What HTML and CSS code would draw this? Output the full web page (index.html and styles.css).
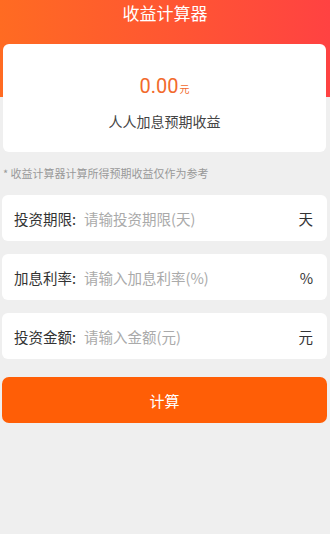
FILE: index.html
```
<!DOCTYPE html>
<html lang="zh">
<head>
<meta charset="utf-8">
<link rel="stylesheet" href="styles.css">
</head>
<body>
<div class="page">
  <div class="hero">
    <div class="title">收益计算器</div>
  </div>
  <div class="content">
    <div class="card">
      <div class="amount">0.00<span class="unit">元</span></div>
      <div class="caption">人人加息预期收益</div>
    </div>
    <div class="note">* 收益计算器计算所得预期收益仅作为参考</div>
    <div class="row"><span class="label">投资期限:</span><span class="ph">请输投资期限(天)</span><span class="suffix">天</span></div>
    <div class="row"><span class="label">加息利率:</span><span class="ph">请输入加息利率(%)</span><span class="suffix">%</span></div>
    <div class="row"><span class="label">投资金额:</span><span class="ph">请输入金额(元)</span><span class="suffix">元</span></div>
    <button class="btn">计算</button>
  </div>
</div>
</body>
</html>
```
FILE: styles.css
```
html, body {
  margin: 0;
  padding: 0;
}
body {
  background: #efefef;
  font-family: "Noto Sans CJK SC", "Noto Sans", sans-serif;
  width: 330px;
  height: 534px;
  overflow: hidden;
}
.page {
  position: relative;
}
.hero {
  height: 97px;
  background: linear-gradient(90deg, #ff6b22 0%, #ff5533 55%, #ff4242 100%);
}
.title {
  color: #fff;
  font-size: 17px;
  text-align: center;
  line-height: 26px;
  padding-top: 0;
}
.content {
  margin-top: -53px;
  padding: 0 3px 0 2px;
  display: flex;
  flex-direction: column;
}
.card {
  background: #fff;
  border-radius: 6px;
  height: 108px;
  margin-left: 1px;
  margin-right: 1px;
  display: flex;
  flex-direction: column;
  align-items: center;
}
.amount {
  margin-top: 30px;
  color: #f26a2c;
  font-family: "Roboto", "Noto Sans", sans-serif;
  font-size: 20px;
  line-height: 24px;
}
.unit {
  font-family: "Noto Sans CJK SC", sans-serif;
  font-size: 10px;
  margin-left: 1px;
}
.caption {
  margin-top: 10px;
  font-size: 14px;
  color: #444;
  line-height: 20px;
}
.note {
  font-size: 11px;
  color: #999;
  line-height: 16px;
  margin-top: 13px;
  padding-left: 1px;
}
.row {
  background: #fff;
  border-radius: 6px;
  height: 46px;
  margin-top: 13px;
  display: flex;
  align-items: center;
  padding: 0 14px 0 12px;
  font-size: 14.5px;
}
.row + .row {
  margin-top: 13px;
}
.note + .row {
  margin-top: 14px;
}
.label {
  color: #333;
}
.ph {
  color: #aaa;
  margin-left: 8px;
  flex: 1;
}
.suffix {
  color: #333;
}
.btn {
  margin-top: 18px;
  height: 46px;
  border: none;
  border-radius: 7px;
  background: #ff5e06;
  color: #fff;
  font-family: "Noto Sans CJK SC", sans-serif;
  font-size: 15px;
}
```
